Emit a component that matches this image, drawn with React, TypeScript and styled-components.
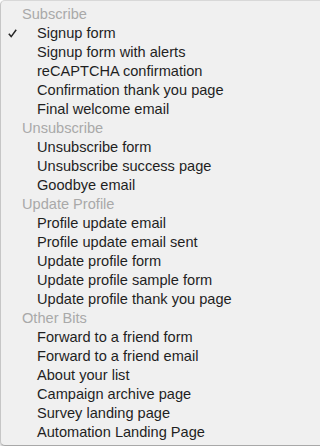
import { Fragment } from "react";
import styled, { createGlobalStyle } from "styled-components";

const GlobalStyle = createGlobalStyle`
    html, body {
        margin: 0;
        padding: 0;
        background: #ffffff;
        overflow: hidden;
    }
`;

const Menu = styled.ul`
    list-style: none;
    margin: 0;
    width: calc(100vw + 10px);
    box-sizing: border-box;
    padding: 4px 0 3px;
    background-color: #f0f0f0;
    border: 1px solid #c6c6c6;
    border-top-color: #d8d8d8;
    border-bottom-color: #a8a8a8;
    border-radius: 5px;
    box-shadow: 0 2px 3px rgba(0, 0, 0, 0.25);
    font-family: "Liberation Sans", Arial, sans-serif;
    font-size: 14.6px;
`;

const GroupLabel = styled.li`
    height: 19px;
    line-height: 19px;
    padding-left: 21px;
    color: #a9a9a9;
    white-space: nowrap;
`;

const Item = styled.li`
    position: relative;
    height: 19px;
    line-height: 19px;
    padding-left: 36px;
    color: #1f1f1f;
    white-space: nowrap;
`;

const Check = styled.svg`
    position: absolute;
    left: 7px;
    top: 5px;
`;

type Group = { label: string; items: string[] };

const groups: Group[] = [
    {
        label: "Subscribe",
        items: [
            "Signup form",
            "Signup form with alerts",
            "reCAPTCHA confirmation",
            "Confirmation thank you page",
            "Final welcome email",
        ],
    },
    {
        label: "Unsubscribe",
        items: ["Unsubscribe form", "Unsubscribe success page", "Goodbye email"],
    },
    {
        label: "Update Profile",
        items: [
            "Profile update email",
            "Profile update email sent",
            "Update profile form",
            "Update profile sample form",
            "Update profile thank you page",
        ],
    },
    {
        label: "Other Bits",
        items: [
            "Forward to a friend form",
            "Forward to a friend email",
            "About your list",
            "Campaign archive page",
            "Survey landing page",
            "Automation Landing Page",
        ],
    },
];

const selected = "Signup form";

export default function App() {
    return (
        <>
            <GlobalStyle />
            <Menu>
                {groups.map((group) => (
                    <Fragment key={group.label}>
                        <GroupLabel>{group.label}</GroupLabel>
                        {group.items.map((item) => (
                            <Item key={item}>
                                {item === selected && (
                                    <Check width="9" height="9" viewBox="0 0 9 9">
                                        <path
                                            d="M0.8 4.8 L3.2 7.6 L8.2 0.8"
                                            fill="none"
                                            stroke="#262626"
                                            strokeWidth="1.5"
                                        />
                                    </Check>
                                )}
                                {item}
                            </Item>
                        ))}
                    </Fragment>
                ))}
            </Menu>
        </>
    );
}
